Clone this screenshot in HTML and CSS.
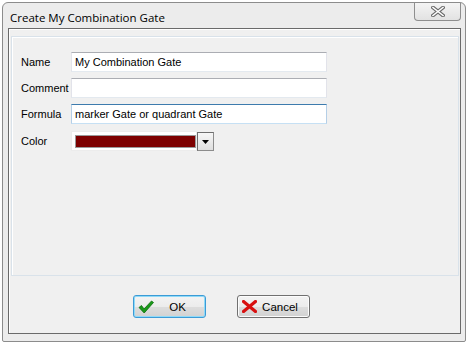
FILE: index.html
```html
<!DOCTYPE html>
<html>
<head>
<meta charset="utf-8">
<link rel="stylesheet" href="styles.css">
</head>
<body>
<div class="window">
  <div class="titlebar">
    <span class="title">Create My Combination Gate</span>
    <div class="close">
      <svg width="14" height="11" viewBox="0 0 14 11">
        <path d="M2 1.5 L12 9.5 M12 1.5 L2 9.5" stroke="#6b6b6b" stroke-width="3.6" stroke-linecap="square" fill="none"/>
        <path d="M2 1.5 L12 9.5 M12 1.5 L2 9.5" stroke="#ffffff" stroke-width="1.6" stroke-linecap="square" fill="none"/>
      </svg>
    </div>
  </div>
  <div class="client">
    <div class="panel">
      <div class="form">
        <label class="lbl">Name</label>
        <div class="input">My Combination Gate</div>
        <label class="lbl">Comment</label>
        <div class="input"></div>
        <label class="lbl">Formula</label>
        <div class="input focus">marker Gate or quadrant Gate</div>
        <label class="lbl">Color</label>
        <div class="combo-row">
          <div class="combo"><div class="swatch"></div></div>
          <div class="dropbtn">
            <svg width="7" height="4" viewBox="0 0 7 4"><path d="M0 0 H7 L3.5 4 Z" fill="#000"/></svg>
          </div>
        </div>
      </div>
    </div>
    <div class="buttons">
      <div class="btn default">
        <svg class="icon" width="16" height="14" viewBox="0 0 16 14">
          <path d="M1 7.5 L3.5 5.5 L6 9 L13.5 1 L15.5 2.5 L6.2 13 Z" fill="#1a9a1a" stroke="#0b6e0b" stroke-width="0.8" stroke-linejoin="round"/>
        </svg>
        <span class="btxt ok">OK</span>
      </div>
      <div class="btn">
        <svg class="icon" width="15" height="13" viewBox="0 0 15 13">
          <path d="M1.5 1.5 L13.5 11.5 M13.5 1.5 L1.5 11.5" stroke="#d81010" stroke-width="3.2" stroke-linecap="round" fill="none"/>
        </svg>
        <span class="btxt">Cancel</span>
      </div>
    </div>
  </div>
</div>
</body>
</html>
```
FILE: styles.css
```css
html, body {
  margin: 0;
  padding: 0;
  background: #ffffff;
}
body {
  width: 467px;
  height: 342px;
  overflow: hidden;
  font-family: "Liberation Sans", Arial, sans-serif;
  font-size: 11px;
  color: #000;
}
.window {
  margin: 2px 0 0 2px;
  width: 462px;
  height: 338px;
  border: 1px solid #8c8c8c;
  border-radius: 6px 6px 2px 2px;
  background: #ececec;
  display: flex;
  flex-direction: column;
}
.titlebar {
  height: 25px;
  display: flex;
  justify-content: space-between;
  align-items: flex-start;
}
.title {
  font-family: "Open Sans", "Noto Sans", sans-serif;
  font-size: 11.5px;
  margin: 7px 0 0 7px;
  color: #000;
  letter-spacing: 0;
}
.close {
  width: 45px;
  height: 17px;
  margin-right: 4px;
  border: 1px solid #8e8e8e;
  border-top: none;
  border-radius: 0 0 4px 4px;
  background: linear-gradient(#f4f4f4, #e2e2e2);
  display: flex;
  align-items: center;
  justify-content: center;
}
.client {
  flex: 1;
  margin: 0 4px 7px 5px;
  border: 1px solid #6a6a6a;
  box-shadow: inset 1px 1px 0 #ffffff;
  background: #f0f0f0;
  display: flex;
  flex-direction: column;
}
.panel {
  height: 240px;
  margin: 7px 1px 0 2px;
  border: 1px solid #d9e2ea;
  box-shadow: inset 1px 1px 0 #ffffff;
  padding: 15px 0 0 9px;
  box-sizing: border-box;
}
.form {
  display: grid;
  grid-template-columns: 50px 256px;
  row-gap: 6px;
  align-items: center;
}
.lbl {
  font-size: 11px;
  line-height: 20px;
}
.input {
  height: 20px;
  box-sizing: border-box;
  background: #fff;
  border: 1px solid #e2e3ea;
  border-top-color: #abadb3;
  border-bottom-color: #e3e9ef;
  padding: 0 3px;
  line-height: 18px;
  font-size: 11px;
  white-space: nowrap;
}
.input.focus {
  border-color: #b5cfe7;
  border-top-color: #3d7bad;
  border-bottom-color: #c6e0f4;
}
.combo-row {
  display: flex;
  align-items: flex-start;
  margin-top: 1px;
}
.combo {
  width: 126px;
  height: 20px;
  box-sizing: border-box;
  background: #fff;
  border: 1px solid #ececec;
  padding: 3px 0 0 3px;
}
.swatch {
  width: 121px;
  height: 13px;
  box-sizing: border-box;
  background: #7d0000;
  border: 1px solid #9a9a9a;
}
.dropbtn {
  width: 17px;
  height: 19px;
  margin-top: 1px;
  box-sizing: border-box;
  border: 1px solid #6e6e6e;
  border-right-color: #8c8c8c;
  border-bottom-color: #8c8c8c;
  background: linear-gradient(#f6f6f6, #dedede);
  display: flex;
  align-items: center;
  justify-content: center;
}
.buttons {
  flex: 1;
  display: flex;
  align-items: flex-start;
  padding: 19px 0 0 124px;
  gap: 31px;
}
.btn {
  width: 73px;
  height: 23px;
  box-sizing: border-box;
  border: 1px solid #707070;
  border-radius: 3px;
  background: linear-gradient(#f3f3f3 0%, #ececec 50%, #dddddd 51%, #d2d2d2 100%);
  box-shadow: inset 0 0 0 1px #fcfcfc;
  display: flex;
  align-items: center;
  position: relative;
}
.btn.default {
  border-color: #3c9bd6;
  box-shadow: inset 0 0 0 1px #8fdaf8;
}
.icon {
  margin-left: 4px;
}
.btxt {
  flex: 1;
  text-align: center;
  font-size: 11.5px;
  padding-right: 6px;
}
.btxt.ok {
  padding-right: 4px;
}
```
